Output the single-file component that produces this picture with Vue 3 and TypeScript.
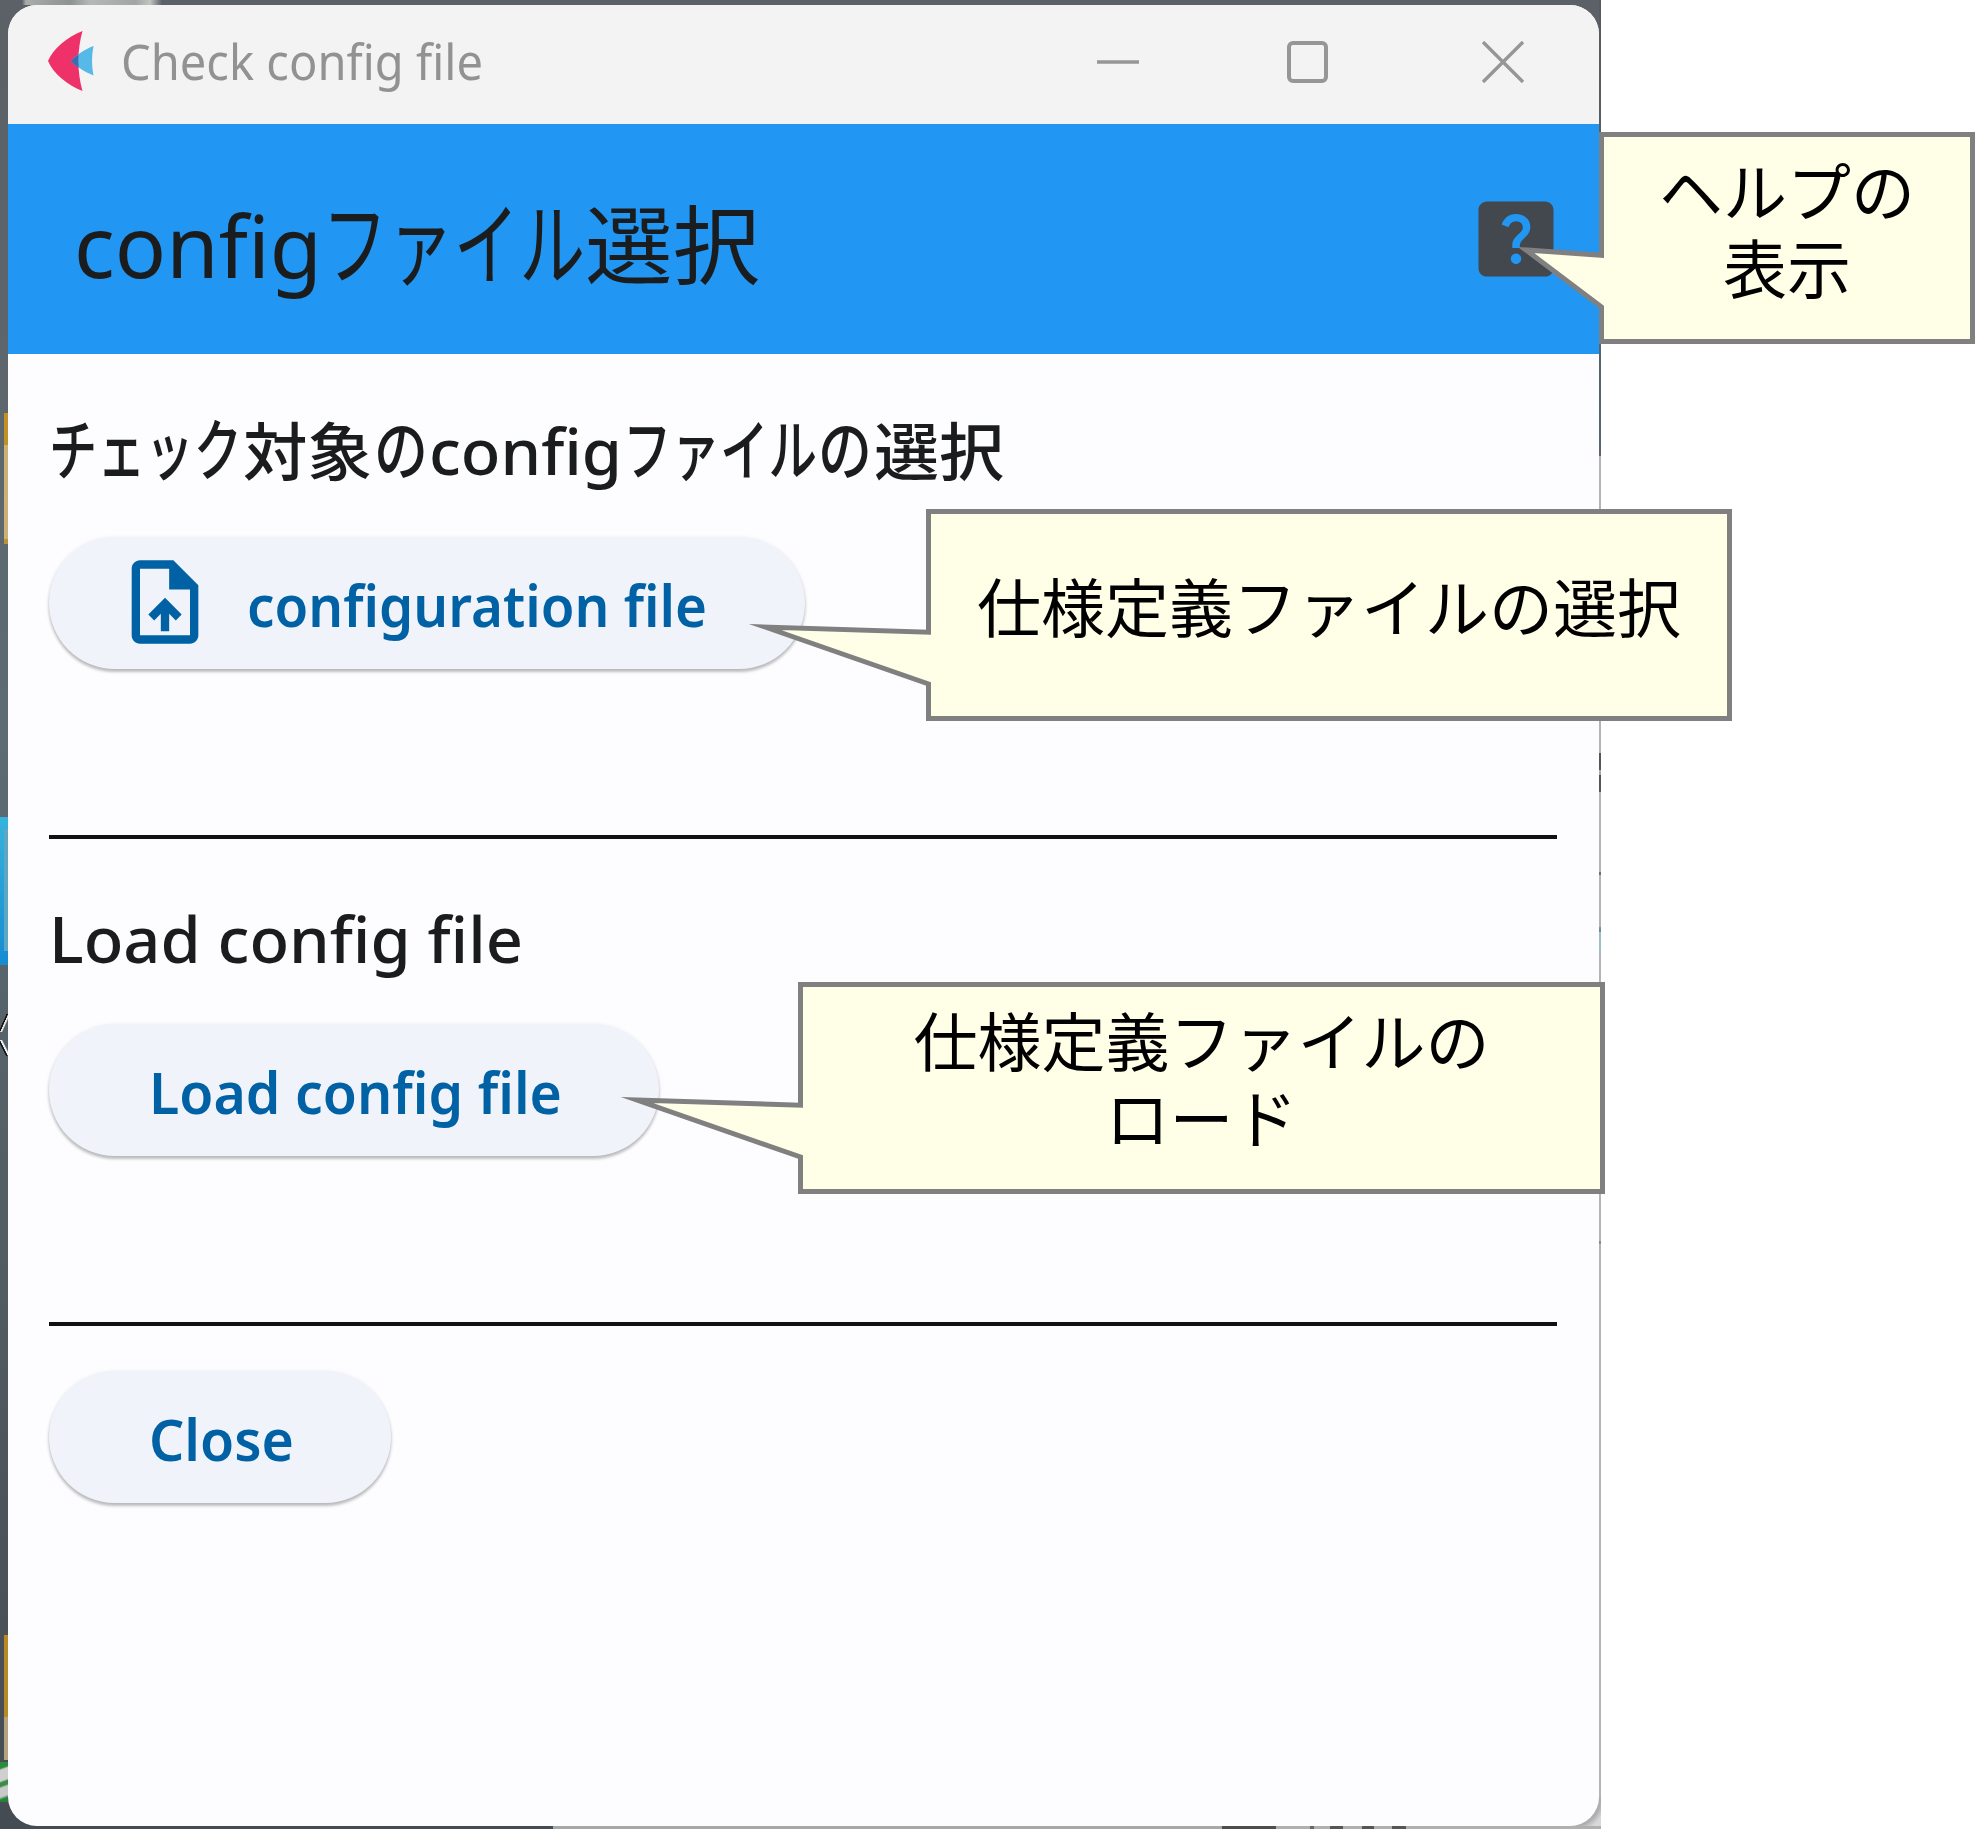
<script setup lang="ts">
interface Run {
  text: string
  x: number
  width: number
  kind?: 'kanji' | 'kana'
}

interface Callout {
  id: string
  left: number
  top: number
  width: number
  tipX: number
  tipY: number
  lines: string[]
}

const windowTitle: Run[] = [{ text: 'Check config file', x: 113, width: 362 }]

const pageTitle: Run[] = [
  { text: 'config', x: 66, width: 248 },
  { text: 'ファイル', x: 314, width: 263, kind: 'kana' },
  { text: '選択', x: 577, width: 175, kind: 'kanji' },
]

const selectHeading: Run[] = [
  { text: 'チェック', x: -1, width: 193, kind: 'kana' },
  { text: '対象', x: 193, width: 129, kind: 'kanji' },
  { text: 'の', x: 324, width: 54, kind: 'kana' },
  { text: 'config', x: 379, width: 193 },
  { text: 'ファイル', x: 573, width: 194, kind: 'kana' },
  { text: 'の', x: 768, width: 54, kind: 'kana' },
  { text: '選択', x: 824, width: 130, kind: 'kanji' },
]

const loadHeading: Run[] = [{ text: 'Load config file', x: -1, width: 474 }]

const CALLOUT_HEIGHT = 212

const callouts: Callout[] = [
  { id: 'help', left: 1599, top: 132, width: 376, tipX: -73, tipY: 118, lines: ['ヘルプの', '表示'] },
  { id: 'select', left: 926, top: 509, width: 806, tipX: -161, tipY: 118, lines: ['仕様定義ファイルの選択'] },
  { id: 'load', left: 798, top: 982, width: 807, tipX: -161, tipY: 118, lines: ['仕様定義ファイルの', 'ロード'] },
]

function outline(c: Callout): string {
  const r = c.width - 2.5
  const b = CALLOUT_HEIGHT - 2.5
  return `M2.5 2.5H${r}V${b}H2.5V175L${c.tipX} ${c.tipY}L2.5 123.2Z`
}
</script>

<template>
  <div class="page">
    <div class="desktop">
      <main class="window">
        <header class="titlebar">
          <svg class="logo" width="50" height="64" viewBox="0 0 50 64" aria-hidden="true">
            <path d="M35.500 2C20 8 6 20 1 32C6 44 20 56 35.500 62C30 42 30 22 35.500 2Z" fill="#ef3169" />
            <path d="M46.500 17C38 20 28 27 24 32C28 37 38 43 46.500 46.500C44.500 37 44.500 27 46.500 17Z" fill="#57b9e8" />
            <path d="M31.500 25.500C28 28 25.500 30 24 32C26 34.500 28.500 36.500 31.700 38.500Q31 32 31.500 25.500Z" fill="#3a6cae" />
          </svg>
          <svg class="line window-title" width="490" height="118">
            <text v-for="r in windowTitle" :key="r.x" :x="r.x - 89" y="75" :textLength="r.width" lengthAdjust="spacingAndGlyphs">{{ r.text }}</text>
          </svg>
          <div class="controls">
            <svg width="42" height="42" viewBox="0 0 42 42"><path d="M0 21H42" /></svg>
            <svg width="42" height="42" viewBox="0 0 42 42"><rect x="2" y="2" width="37" height="38" rx="4" stroke-width="4" /></svg>
            <svg width="42" height="42" viewBox="0 0 42 42"><path d="M1 1L41 41M41 1L1 41" /></svg>
          </div>
        </header>

        <div class="appbar">
          <svg class="line page-title" width="900" height="230">
            <text v-for="r in pageTitle" :key="r.x" :class="r.kind" :x="r.x" y="154" :textLength="r.width" lengthAdjust="spacingAndGlyphs">{{ r.text }}</text>
          </svg>
          <svg class="help" width="100" height="100" viewBox="0 0 24 24">
            <path d="M19 3H5c-1.100 0-2 .9-2 2v14c0 1.100.9 2 2 2h14c1.100 0 2-.9 2-2V5c0-1.100-.9-2-2-2zm-6.990 15c-.7 0-1.260-.56-1.260-1.260 0-.71.56-1.250 1.260-1.250.71 0 1.250.54 1.250 1.250-.01.69-.54 1.260-1.250 1.260zm3.010-7.400c-.76 1.110-1.480 1.460-1.870 2.170-.16.29-.22.48-.22 1.410h-1.820c0-.49-.08-1.290.31-1.980.49-.87 1.420-1.390 1.960-2.160.57-.81.25-2.330-1.370-2.330-1.060 0-1.580.8-1.800 1.480l-1.650-.7C9.010 7.150 10.220 6 11.990 6c1.480 0 2.490.67 3.010 1.520.44.72.7 2.070.02 3.080z" />
          </svg>
        </div>

        <div class="content">
          <section class="group first">
            <svg class="line heading" width="1000" height="100">
              <text v-for="r in selectHeading" :key="r.x" :class="r.kind" :x="r.x" y="70" :textLength="r.width" lengthAdjust="spacingAndGlyphs">{{ r.text }}</text>
            </svg>
            <button class="pill select" type="button">
              <svg class="upload" width="100" height="100" viewBox="0 0 24 24">
                <path d="M14 2H6c-1.100 0-1.990.9-1.990 2L4 20c0 1.100.89 2 1.990 2H18c1.100 0 2-.9 2-2V8l-6-6zm4 18H6V4h7v5h5v11zM8 15.010l1.410 1.410L11 14.840V19h2v-4.160l1.590 1.590L16 15.010 12.010 11 8 15.010z" />
              </svg>
              <svg class="line label" width="466" height="132">
                <text x="2" y="90" textLength="460" lengthAdjust="spacingAndGlyphs">configuration file</text>
              </svg>
            </button>
          </section>
          <section class="group">
            <svg class="line heading" width="1000" height="100">
              <text v-for="r in loadHeading" :key="r.x" :x="r.x" y="76" :textLength="r.width" lengthAdjust="spacingAndGlyphs">{{ r.text }}</text>
            </svg>
            <button class="pill load" type="button">
              <svg class="line label" width="416" height="132">
                <text x="0" y="90" textLength="413" lengthAdjust="spacingAndGlyphs">Load config file</text>
              </svg>
            </button>
          </section>
          <button class="pill close" type="button">
            <svg class="line label" width="146" height="132">
              <text x="0" y="90" textLength="145" lengthAdjust="spacingAndGlyphs">Close</text>
            </svg>
          </button>
        </div>
      </main>
    </div>

    <aside
      v-for="c in callouts"
      :key="c.id"
      class="callout"
      :style="{ left: c.left + 'px', top: c.top + 'px', width: c.width + 'px' }"
    >
      <svg class="bubble" :width="c.width" :height="CALLOUT_HEIGHT"><path :d="outline(c)" /></svg>
      <div class="note">
        <span v-for="l in c.lines" :key="l">{{ l }}</span>
      </div>
    </aside>
  </div>
</template>

<style>
body {
  margin: 0;
  background: #fff;
}
</style>

<style scoped>
.page {
  position: relative;
  width: 1975px;
  height: 1829px;
  overflow: hidden;
  background: #fff;
  font-family: "Noto Sans", "Noto Sans CJK JP", sans-serif;
}
.desktop {
  box-sizing: border-box;
  width: 1601px;
  height: 1829px;
  padding: 5px 2px 3px 8px;
  background:
    linear-gradient(90deg, transparent 22px, #a9adab 26px, #8d9292 70px, #b5b9b6 90px, #a1a5a4 135px, #c1c5bf 150px, transparent 162px) 0 0 / 200px 5px no-repeat,
    linear-gradient(#c29125 0 32px, #cbb176 32px 126px, #bd9234 126px) 4px 413px / 4px 131px no-repeat,
    linear-gradient(90deg, transparent 4px, #5da6c4 4px) 0 829px / 8px 122px no-repeat,
    linear-gradient(#35b4dc, #168bd3) 0 817px / 8px 148px no-repeat,
    linear-gradient(to bottom right, transparent 40%, #111 42% 50%, #e8e4dc 52% 60%, transparent 66%) 0 1014px / 8px 18px no-repeat,
    linear-gradient(to top right, transparent 36%, #111 40% 48%, #e8f0f4 50% 60%, transparent 66%) 0 1040px / 8px 16px no-repeat,
    linear-gradient(#b88a23 0 82px, #b3a27b 82px) 4px 1635px / 4px 125px no-repeat,
    linear-gradient(160deg, #2c8b38 0 6px, #cfcfcf 8px 18px, #3b8a45 20px 23px, #c9c9c9 25px 33px, #238336 36px) 0 1762px / 8px 40px no-repeat,
    linear-gradient(#555 0 17px, #aaa 17px 22px, #555 22px) 1599px 753px / 2px 39px no-repeat,
    linear-gradient(#6f6f6f, #6f6f6f) 1599px 872px / 2px 3px no-repeat,
    linear-gradient(#a58a5c 0 2px, #4d8fc9 2px 5px, #a0bcc4 5px) 1599px 927px / 2px 26px no-repeat,
    linear-gradient(#8a8a8a, #8a8a8a) 1599px 1241px / 2px 3px no-repeat,
    linear-gradient(#555b61, #59666d) 1599px 0 / 2px 456px no-repeat,
    linear-gradient(90deg, #454b52 553px, #a8a8a8 553px 1222px, #4d4d4d 1222px 1276px, #b0b0b0 1276px 1310px, #666 1310px 1314px, #b0b0b0 1314px 1330px, #555 1330px 1343px, #b0b0b0 1343px 1362px, #555 1362px 1374px, #b0b0b0 1374px 1392px, #555 1392px 1406px, #b0b0b0 1406px) 0 1826px / 100% 3px no-repeat,
    radial-gradient(circle at 0 0, #aeaeae 30px, #d8d8d8 36px) 1571px 1797px / 30px 32px no-repeat,
    linear-gradient(#b4b4b4, #b4b4b4) 1599px 456px / 2px 1373px no-repeat,
    linear-gradient(#5b6166, #5d6b72 40%, #454b52);
}
.window {
  width: 1591px;
  height: 1821px;
  border-radius: 29px;
  overflow: hidden;
  background: #fdfdff;
}
.titlebar {
  display: flex;
  height: 119px;
  background: #f3f3f3;
}
.logo {
  flex: none;
  margin: 24px 0 0 39px;
}
.line {
  display: block;
  flex: none;
  overflow: visible;
}
.window-title {
  font-size: 49px;
  fill: #929292;
}
.controls {
  display: flex;
  gap: 153px;
  margin: 36px 75px 0 auto;
  fill: none;
  stroke: #969696;
  stroke-width: 3.4;
}
.controls svg:first-child {
  margin-right: -5px;
}
.appbar {
  display: flex;
  justify-content: space-between;
  height: 230px;
  background: #2196f3;
}
.page-title {
  font-size: 86px;
  fill: #1a1c1e;
}
.kanji,
.kana {
  font-family: "Noto Sans CJK JP", sans-serif;
}
.kana {
  font-size: 1.06em;
}
.help {
  margin: 65px 33px 0 0;
  fill: #43474e;
}
.content {
  padding: 0 42px 0 41px;
}
.group {
  display: flex;
  flex-direction: column;
  align-items: flex-start;
  box-sizing: border-box;
  height: 487px;
  padding-top: 48px;
  border-bottom: 4px solid #111;
}
.group.first {
  height: 485px;
  padding-top: 51px;
}
.heading {
  flex: none;
  margin-left: 1px;
  font-size: 63px;
  font-weight: 500;
  fill: #1a1c1e;
}
.pill {
  display: flex;
  flex: none;
  box-sizing: border-box;
  height: 132px;
  padding: 0 0 0 100px;
  border: 0;
  border-radius: 66px;
  background: #f0f3fa;
  box-shadow: 0 3px 3px rgba(0, 0, 0, 0.22), 0 1px 4px rgba(0, 0, 0, 0.1);
  font-family: inherit;
}
.select {
  width: 756px;
  margin-top: 32px;
  padding-left: 66px;
}
.load {
  width: 610px;
  margin-top: 37px;
}
.close {
  width: 342px;
  margin-top: 45px;
}
.upload {
  flex: none;
  margin: 15px 30px 0 0;
  fill: #0061a4;
}
.label {
  font-size: 57px;
  font-weight: 600;
  fill: #0061a4;
}
.callout {
  position: absolute;
  height: 212px;
}
.bubble {
  position: absolute;
  inset: 0;
  overflow: visible;
  fill: #ffffe7;
  stroke: #808080;
  stroke-width: 5;
  stroke-miterlimit: 12;
}
.note {
  position: relative;
  display: flex;
  flex-direction: column;
  align-items: center;
  justify-content: center;
  box-sizing: border-box;
  height: 100%;
  padding-bottom: 22px;
  color: #000;
  font-family: "Noto Sans CJK JP", sans-serif;
  font-size: 64px;
  line-height: 77px;
  white-space: nowrap;
}
</style>
